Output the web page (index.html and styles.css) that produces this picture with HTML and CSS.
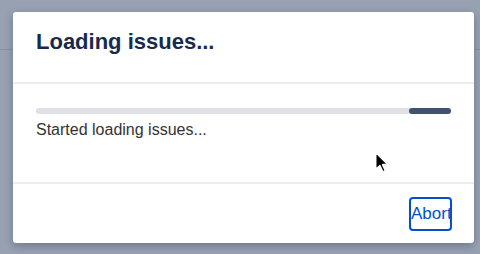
FILE: index.html
```html
<!DOCTYPE html>
<html lang="en">
  <head>
    <title>Loading issues</title>
    <link rel="stylesheet" href="styles.css">
  </head>
  <body>
    <div class="page">
      <div class="page-header"></div>
    </div>

    <div class="overlay">
      <div class="dialog">
        <div class="dialog-header">
          <h2>Loading issues...</h2>
        </div>

        <div class="dialog-body">
          <div class="progress">
            <div class="progress-bar"></div>
          </div>
          <p class="status">Started loading issues...</p>
        </div>

        <div class="dialog-footer">
          <button class="abort">Abort</button>
        </div>
      </div>
    </div>

    <svg class="cursor" width="15" height="23" viewBox="-1.5 -1.5 14 22">
      <path d="M0 0 L0 16 L4 12.5 L6.8 18.5 L9.2 17.4 L6.5 11.5 L11.5 11.5 Z"
            fill="#000" stroke="#fff" stroke-width="1.4" stroke-linejoin="round"/>
    </svg>
  </body>
</html>
```

FILE: styles.css
```css
body {
  margin: 0;
  width: 480px;
  height: 254px;
  overflow: hidden;
  background-color: #98a1b1;
  font-family: "Liberation Sans", Arial, sans-serif;
}
.page {
  height: 254px;
}
.page-header {
  height: 49px;
  border-bottom: 1px solid #87909f;
}
.overlay {
  position: absolute;
  top: 12px;
  left: 13px;
}
.dialog {
  width: 461px;
  height: 231px;
  background-color: #fff;
  border-radius: 3px;
  box-shadow: 0 3px 8px rgba(9, 30, 66, 0.3);
  display: flex;
  flex-direction: column;
}
.dialog-header {
  height: 70px;
  padding: 0 23px;
  border-bottom: 2px solid #ebecf0;
  box-sizing: content-box;
}
.dialog-header h2 {
  margin: 0;
  padding-top: 17px;
  font-size: 22px;
  line-height: 26px;
  font-weight: bold;
  color: #172b4d;
}
.dialog-body {
  height: 100px;
  padding: 24px 23px 0;
  box-sizing: border-box;
  border-bottom: 2px solid #ebecf0;
}
.progress {
  height: 6px;
  border-radius: 3px;
  background-color: #dfe1e6;
  display: flex;
  justify-content: flex-end;
}
.progress-bar {
  width: 42px;
  border-radius: 3px;
  background-color: #42526e;
}
.status {
  margin: 6px 0 0;
  font-size: 16px;
  line-height: 20px;
  color: #333;
}
.dialog-footer {
  flex-grow: 1;
  display: flex;
  align-items: center;
  justify-content: flex-end;
  padding-right: 22px;
}
.abort {
  width: 43px;
  height: 34px;
  padding: 0;
  border: 2px solid #0052cc;
  border-radius: 4px;
  background-color: #fff;
  color: #0052cc;
  font-family: "Liberation Sans", Arial, sans-serif;
  font-size: 17px;
  overflow: visible;
}
.cursor {
  position: absolute;
  left: 373.5px;
  top: 150.5px;
}
```
